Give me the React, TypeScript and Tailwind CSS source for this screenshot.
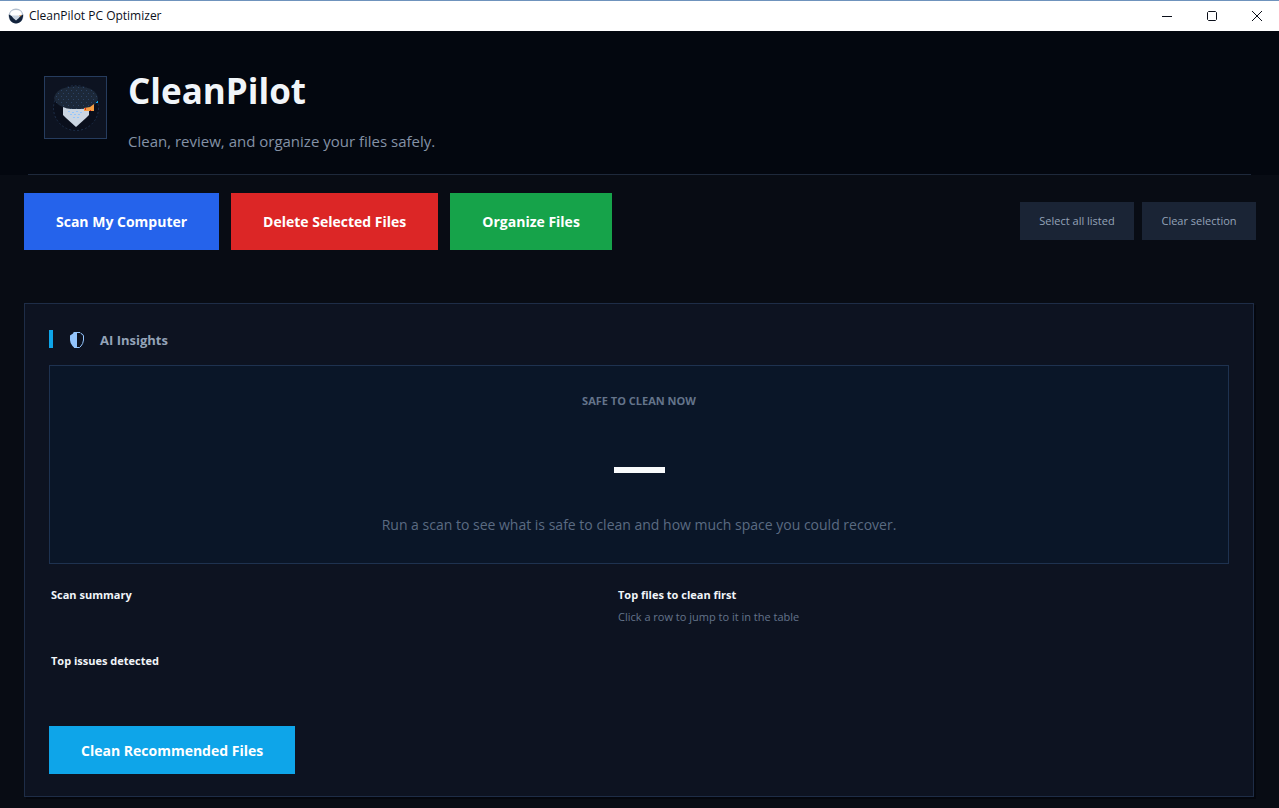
const actions = [
  { label: "Scan My Computer", className: "bg-[#2563eb]" },
  { label: "Delete Selected Files", className: "bg-[#dc2626]" },
  { label: "Organize Files", className: "bg-[#16a34a]" },
];

const selectionActions = ["Select all listed", "Clear selection"];

function AppIcon() {
  return (
    <svg viewBox="0 0 16 16" className="h-4 w-4" aria-hidden="true">
      <circle cx="8" cy="8" r="7.5" fill="#b4c0cf" />
      <path d="M.8 6.500Q1 13 5 14.800Q8 16 11 14.800Q15 13 15.200 6.500L12.500 8 8 12.500 3.500 8Z" fill="#13233c" />
      <path d="M2 6.300Q2.500 2 8 2T14 6.300L12 8H4Z" fill="#fff" />
      <path d="M3.600 7.400h8.800L10.800 10 8 12.200 5.200 10Z" fill="#cbd5e1" />
      <path d="M11.400 7.200h1.800v1h-1.800z" fill="#f59e42" />
    </svg>
  );
}

function PilotLogo() {
  return (
    <svg viewBox="0 0 61 61" className="h-full w-full" aria-hidden="true">
      <defs>
        <pattern id="dots" width="5" height="6" patternUnits="userSpaceOnUse">
          <rect width="1" height="1" x="1" y="1" fill="#2b4263" />
          <rect width="1" height="1" x="3" y="4" fill="#2b4263" />
        </pattern>
      </defs>
      <circle cx="31" cy="31" r="22.5" fill="#0a0f1c" stroke="#1e2f49" strokeDasharray="2 2" />
      <path d="M18 29h26v9l-3 3-10 9-10-9-3-3Z" fill="#cbd5e1" />
      <path d="M23 34h2v1h-2zM27 35h2v1h-2zM31 34h2v1h-2zM35 35h2v1h-2zM25 37h2v1h-2zM29 37h2v1h-2zM33 37h2v1h-2zM28 40h2v1h-2zM32 40h2v1h-2z" fill="#93c5fd" />
      <path d="M9 21Q11 10 31 9Q51 10 53 21Q51 32 36 32H26Q11 30 9 21Z" fill="#1c2839" />
      <path d="M9 21Q11 10 31 9Q51 10 53 21Q51 32 36 32H26Q11 30 9 21Z" fill="url(#dots)" />
      <path d="M39 31 45 30l4-3v7H39Z" fill="#f59e42" />
      <path d="M40 31h1v2h-1zM45 33h1v1h-1z" fill="#dc2626" />
      <path d="M52 24h1v2h-2v-1h1z" fill="#0ea5e9" />
    </svg>
  );
}

function ShieldIcon() {
  return (
    <svg viewBox="0 0 14 16" className="h-4 w-[14px]" aria-hidden="true">
      <path d="M4 .5H10L11 1.500Q13.500 2.500 13.500 4V8Q13 12 11 14L9.500 15.500H4.500Z" fill="none" stroke="#93c5fd" />
      <path d="M4 0H7V16H4.500L2.500 14Q0 11 0 8V3.500L3 1.500Z" fill="#93c5fd" />
    </svg>
  );
}

const windowControls = [
  { label: "Minimize", path: "M2 7.500H12" },
  { label: "Maximize", path: "M3.500 2.500h7l1 1v7l-1 1h-7l-1-1v-7Z" },
  { label: "Close", path: "M2 2 12 12M12 2 2 12" },
];

function TitleBar() {
  return (
    <div className="flex h-[31px] items-center justify-between border-t border-[#6f93bd] bg-white text-[#0b0f1a]">
      <div className="flex items-center gap-[5px] pl-2">
        <AppIcon />
        <span className="text-[12px]">CleanPilot PC Optimizer</span>
      </div>
      <div className="flex h-full">
        {windowControls.map((control) => (
          <button key={control.label} aria-label={control.label} className="flex w-[45px] items-center justify-center">
            <svg viewBox="0 0 14 14" className="h-[14px] w-[14px]" fill="none" stroke="currentColor">
              <path d={control.path} />
            </svg>
          </button>
        ))}
      </div>
    </div>
  );
}

export default function App() {
  return (
    <div className="flex min-h-screen flex-col bg-[#080c14] font-['Open_Sans','Noto_Sans',sans-serif]">
      <TitleBar />

      {/* Header */}
      <header className="bg-[#03070f] px-7">
        <div className="flex gap-[21px] border-b border-[#1e293b] pb-5 pl-4 pt-9">
          <div className="mt-[9px] h-[63px] w-[63px] border border-[#263c5e] bg-[#0d1321]">
            <PilotLogo />
          </div>
          <div>
            <h1 className="text-[35px] font-bold leading-[48px] text-[#f1f5f9]">CleanPilot</h1>
            <p className="mt-[14px] text-[15px] leading-[25px] text-[#8492a6]">
              Clean, review, and organize your files safely.
            </p>
          </div>
        </div>
      </header>

      {/* Toolbar */}
      <div className="flex items-start justify-between pb-[53px] pl-6 pr-[23px] pt-[18px]">
        <div className="flex gap-3">
          {actions.map((action) => (
            <button key={action.label} className={`h-[57px] px-8 text-[14px] font-bold text-white ${action.className}`}>
              {action.label}
            </button>
          ))}
        </div>
        <div className="flex gap-2 pt-[9px]">
          {selectionActions.map((label) => (
            <button key={label} className="h-[38px] w-[114px] bg-[#1a2435] text-[11px] text-[#94a3b8]">
              {label}
            </button>
          ))}
        </div>
      </div>

      {/* Insights card */}
      <main className="mb-[11px] ml-6 mr-[25px] flex-1 border border-[#1e2d47] bg-[#0d1321] px-6 pb-[22px] pt-[26px] shadow-[2px_2px_0_#04070e]">
        <div className="flex h-5 items-center">
          <span className="h-[18px] w-1 self-start bg-[#0ea5e9]" />
          <span className="ml-[17px]">
            <ShieldIcon />
          </span>
          <h2 className="ml-4 text-[13px] font-bold leading-[20px] text-[#94a3b8]">AI Insights</h2>
        </div>

        <section className="mt-[15px] flex h-[199px] flex-col items-center border border-[#1e3250] bg-[#0a1628] pt-[25px]">
          <h3 className="text-[11px] font-bold leading-[20px] text-[#64748b]">SAFE TO CLEAN NOW</h3>
          <div className="mt-14 h-[6px] w-[51px] bg-[#f8fafc]" />
          <p className="mt-[39px] text-[14px] leading-[25px] text-[#5b6b82]">
            Run a scan to see what is safe to clean and how much space you could recover.
          </p>
        </section>

        <div className="mt-[22px] grid grid-cols-[567px_1fr] pl-[2px] text-[11px] leading-[18px]">
          <div>
            <h3 className="font-bold text-[#f1f5f9]">Scan summary</h3>
            <h3 className="mt-12 font-bold text-[#f1f5f9]">Top issues detected</h3>
          </div>
          <div>
            <h3 className="font-bold text-[#f1f5f9]">Top files to clean first</h3>
            <p className="mt-1 text-[#64748b]">Click a row to jump to it in the table</p>
          </div>
        </div>

        <button className="mt-14 h-12 bg-[#0ea5e9] px-8 text-[14px] font-bold text-white">
          Clean Recommended Files
        </button>
      </main>
    </div>
  );
}
